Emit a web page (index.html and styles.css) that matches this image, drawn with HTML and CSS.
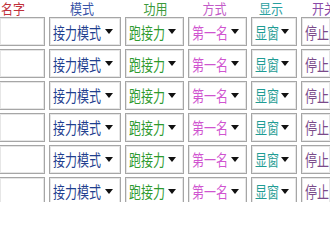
FILE: index.html
```html
<!DOCTYPE html>
<html lang="zh">
<head>
<meta charset="utf-8">
<link rel="stylesheet" href="styles.css">
</head>
<body>
<div class="sheet">
  <div class="hd c-name"><span class="t">名字</span></div>
  <div class="hd c-mode"><span class="t">模式</span></div>
  <div class="hd c-use"><span class="t">功用</span></div>
  <div class="hd c-way"><span class="t">方式</span></div>
  <div class="hd c-show"><span class="t">显示</span></div>
  <div class="hd c-sw"><span class="t">开关</span></div>

  <div class="box name"></div>
  <div class="box sel mode"><span class="t">接力模式</span><i class="arr"></i></div>
  <div class="box sel use"><span class="t">跑接力</span><i class="arr"></i></div>
  <div class="box sel way"><span class="t">第一名</span><i class="arr"></i></div>
  <div class="box sel show"><span class="t">显窗</span><i class="arr"></i></div>
  <div class="box btn"><span class="t">停止</span></div>

  <div class="box name"></div>
  <div class="box sel mode"><span class="t">接力模式</span><i class="arr"></i></div>
  <div class="box sel use"><span class="t">跑接力</span><i class="arr"></i></div>
  <div class="box sel way"><span class="t">第一名</span><i class="arr"></i></div>
  <div class="box sel show"><span class="t">显窗</span><i class="arr"></i></div>
  <div class="box btn"><span class="t">停止</span></div>

  <div class="box name"></div>
  <div class="box sel mode"><span class="t">接力模式</span><i class="arr"></i></div>
  <div class="box sel use"><span class="t">跑接力</span><i class="arr"></i></div>
  <div class="box sel way"><span class="t">第一名</span><i class="arr"></i></div>
  <div class="box sel show"><span class="t">显窗</span><i class="arr"></i></div>
  <div class="box btn"><span class="t">停止</span></div>

  <div class="box name"></div>
  <div class="box sel mode"><span class="t">接力模式</span><i class="arr"></i></div>
  <div class="box sel use"><span class="t">跑接力</span><i class="arr"></i></div>
  <div class="box sel way"><span class="t">第一名</span><i class="arr"></i></div>
  <div class="box sel show"><span class="t">显窗</span><i class="arr"></i></div>
  <div class="box btn"><span class="t">停止</span></div>

  <div class="box name"></div>
  <div class="box sel mode"><span class="t">接力模式</span><i class="arr"></i></div>
  <div class="box sel use"><span class="t">跑接力</span><i class="arr"></i></div>
  <div class="box sel way"><span class="t">第一名</span><i class="arr"></i></div>
  <div class="box sel show"><span class="t">显窗</span><i class="arr"></i></div>
  <div class="box btn"><span class="t">停止</span></div>

  <div class="box name"></div>
  <div class="box sel mode"><span class="t">接力模式</span><i class="arr"></i></div>
  <div class="box sel use"><span class="t">跑接力</span><i class="arr"></i></div>
  <div class="box sel way"><span class="t">第一名</span><i class="arr"></i></div>
  <div class="box sel show"><span class="t">显窗</span><i class="arr"></i></div>
  <div class="box btn"><span class="t">停止</span></div>
</div>
</body>
</html>
```

FILE: styles.css
```css
html, body {
  margin: 0;
  padding: 0;
  background: #ffffff;
  overflow: hidden;
}
body {
  width: 330px;
  height: 202px;
  font-family: "Noto Sans CJK SC", "Noto Sans", sans-serif;
  font-size: 12px;
}
.sheet {
  display: grid;
  width: 330px;
  grid-template-columns: 45px 72px 59px 59px 46px 29px;
  grid-template-rows: 14px;
  grid-auto-rows: 29px;
  column-gap: 4px;
  row-gap: 3px;
}
.t {
  display: inline-block;
  transform: scaleY(1.3);
  line-height: 12px;
  white-space: nowrap;
}
.hd {
  display: flex;
  align-items: flex-end;
  justify-content: center;
  height: 14px;
  padding-right: 6px;
  box-sizing: border-box;
}
.hd .t { transform: scaleY(1.15); }
.c-name { color: #c0303a; justify-content: flex-start; padding-left: 1px; padding-right: 0; }
.c-mode { color: #3a55a8; }
.c-use  { color: #3a9a3a; padding-right: 0; padding-left: 2px; }
.c-way  { color: #c35ac8; }
.c-show { color: #2aa0a0; }
.c-sw   { color: #8a4aa8; justify-content: flex-start; padding-left: 11px; padding-right: 0; }

.box {
  box-sizing: border-box;
  border: 1px solid #a6a6a6;
  box-shadow: inset 0 0 0 1px #e6e6e6;
  background: #ffffff;
  display: flex;
  align-items: center;
  padding: 0 3px;
}
.name { border-left: none; }
.btn  { border-right: none; color: #7a4a8a; }
.sel { justify-content: space-between; padding-right: 7px; }
.arr {
  display: block;
  width: 0;
  height: 0;
  border-left: 4px solid transparent;
  border-right: 4px solid transparent;
  border-top: 5px solid #111;
}
.mode { color: #1f3f8f; }
.use  { color: #2e9a2e; }
.way  { color: #d055d0; }
.show { color: #1f9c94; }
```
